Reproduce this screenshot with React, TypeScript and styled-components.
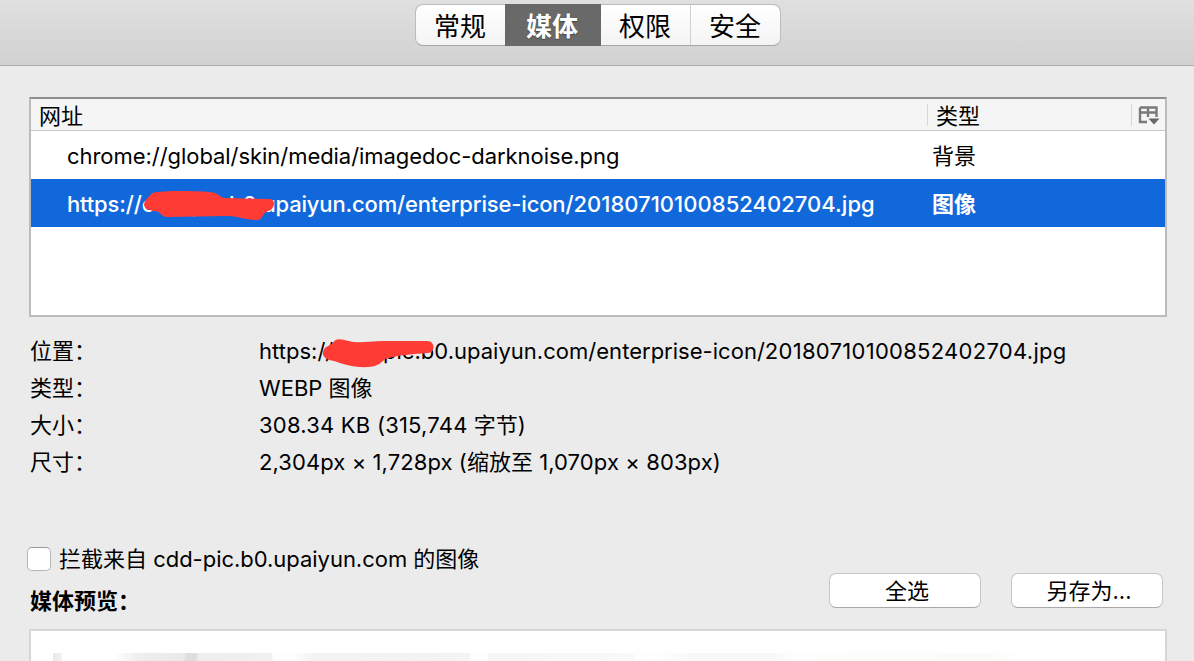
import React from 'react'
import styled, { createGlobalStyle } from 'styled-components'

const GlobalStyle = createGlobalStyle`
* {
  box-sizing: border-box;
}
body {
  margin: 0;
  background: #ebebeb;
  color: #000;
  font-family: Inter, "Noto Sans CJK SC", sans-serif;
  font-size: 22px;
  overflow: hidden;
}
`

const Window = styled.div`
height: 661px;
overflow: hidden;
display: flex;
flex-direction: column;
`

const Toolbar = styled.div`
height: 66px;
flex: none;
display: flex;
justify-content: center;
align-items: flex-start;
padding: 4px 0 0 2px;
background: linear-gradient(#e0e0e0, #d1d1d1);
border-bottom: 1px solid #adadad;
`

const Segments = styled.div`
display: flex;
width: 366px;
height: 42px;
border: 1px solid #bcbcbc;
border-bottom-color: #a5a5a5;
border-radius: 8px;
background: linear-gradient(#fff, #f4f4f4);
`

const Segment = styled.button<{$active?: boolean, $width: number, $line?: boolean}>`
width: ${props => props.$width}px;
height: ${props => props.$active ? "42px" : "40px"};
margin: ${props => props.$active ? "-1px 0" : "0"};
padding: ${props => props.$active ? "3px 2px 0 0" : "2px 1px 0 0"};
border: 0;
border-left: ${props => props.$line ? "1px solid #d0d0d0" : "0"};
background: ${props => props.$active ? "#696969" : "transparent"};
color: ${props => props.$active ? "#fff" : "#000"};
text-shadow: ${props => props.$active ? "0 1px 1px #444" : "none"};
font-family: inherit;
font-size: 26px;
font-weight: ${props => props.$active ? 700 : 400};
line-height: 40px;
`

const Content = styled.main`
flex: 1;
display: flex;
flex-direction: column;
padding: 31px 27px 0 29px;
`

const Table = styled.div`
height: 220px;
flex: none;
background: #fff;
border: 2px solid #bcbcbc;
border-top-color: #8e8e8e;
`

const tableColumns: string = `
  display: grid;
  grid-template-columns: 896px 1fr 34px;
  align-items: center;
`

const TableHead = styled.div`
${tableColumns}
height: 32px;
background: #f5f5f5;
border-bottom: 1px solid #c9c9c9;
`

const HeadCell = styled.div<{$line?: boolean}>`
height: 22px;
line-height: 24px;
padding-left: 8px;
border-left: ${props => props.$line ? "1px solid #d6d6d6" : "0"};
`

const PickerCell = styled(HeadCell)`
padding: 2px 0 0 6px;
line-height: 0;
`

const TableRow = styled.div<{$selected?: boolean}>`
${tableColumns}
height: 48px;
line-height: 50px;
background: ${props => props.$selected ? "#1168da" : "#fff"};
color: ${props => props.$selected ? "#fff" : "#000"};
font-weight: ${props => props.$selected ? 500 : 400};
`

const Cell = styled.div<{$indent?: boolean}>`
position: relative;
height: 48px;
padding-left: ${props => props.$indent ? "36px" : "5px"};
white-space: nowrap;
`

const KindCell = styled(Cell)<{$selected?: boolean}>`
font-weight: ${props => props.$selected ? 700 : 400};
`

const Latin = styled.span<{$spacing?: number}>`
letter-spacing: ${props => props.$spacing || 0}px;
`

const Scribble = styled.svg<{$left: number, $top: number}>`
position: absolute;
left: ${props => props.$left}px;
top: ${props => props.$top}px;
`

const Details = styled.dl`
display: grid;
grid-template-columns: 229px 1fr;
grid-auto-rows: 37px;
margin: 16px 0 0;
padding-left: 1px;
line-height: 37px;
`

const Term = styled.dt`
margin: 0;
`

const Value = styled.dd`
position: relative;
margin: 0;
white-space: nowrap;
`

const Actions = styled.div`
display: flex;
justify-content: space-between;
height: 90px;
margin-top: 58px;
padding-right: 4px;
`

const BlockLabel = styled.label`
display: flex;
align-items: center;
height: 40px;
margin-left: -2px;
line-height: 34px;
white-space: nowrap;
`

const Checkbox = styled.input`
appearance: none;
width: 24px;
height: 24px;
margin: 0 8px 0 0;
background: #fff;
border: 1px solid #b5b5b5;
border-top-color: #999;
border-radius: 5px;
`

const PreviewTitle = styled.div`
height: 42px;
line-height: 44px;
padding-left: 1px;
font-weight: 700;
`

const Buttons = styled.div`
display: flex;
gap: 30px;
padding-top: 34px;
`

const Button = styled.button`
width: 152px;
height: 35px;
padding: 1px 0 0 4px;
border: 1px solid #c6c6c6;
border-bottom-color: #a9a9a9;
border-radius: 7px;
background: #fff;
color: #000;
font: inherit;
line-height: 33px;
`

const Preview = styled.div`
flex: none;
height: 40px;
padding: 22px 0 0 22px;
background: #fff;
border: 2px solid #d6d6d6;
`

const PreviewImage = styled.div`
height: 20px;
background: linear-gradient(90deg,
  #e7e7e7 0, #f1f1f1 8px, #fff 10px, #fff 62px, #eeeeee 84px, #eaeaea 130px,
  #dddddd 134px, #dddddd 142px, #eeeeee 146px, #f0f0f0 219px, #fdfdfd 220px, #fdfdfd 240px,
  #f1f2f1 262px, #f3f4f3 416px, #fdfdfd 418px, #fefefe 434px, #f5f5f5 436px, #f8f9f8 580px,
  #fdfdfd 582px, #fefefe 600px, #f7f8f7 640px, #f8f8f8 720px, #fdfdfd 740px, #fdfcfa 800px, #fdfbfa 940px, #fdfefd 960px, #fefefe);
`

const imagePath: string = 'https://cdd-pic.b0.upaiyun.com/enterprise-icon/'
const imageFile: string = '20180710100852402704.jpg'

const ColumnPicker = () => (
  <svg width="22" height="20" viewBox="0 0 22 20" fill="none">
    <path d="M2 1.5H18.5V11M2 1.5V16H9M2 6.5H18.5M10 2V11" stroke="#7a7a7a" strokeWidth="2.4" />
    <path d="M10.5 12.5H21.5L16 18.5Z" fill="#666" />
  </svg>
)

const App = () => {
  return (
    <Window>
      <GlobalStyle />
      <Toolbar>
        <Segments>
          <Segment $width={89}>常规</Segment>
          <Segment $width={96} $active>媒体</Segment>
          <Segment $width={89}>权限</Segment>
          <Segment $width={90} $line>安全</Segment>
        </Segments>
      </Toolbar>
      <Content>
        <Table>
          <TableHead>
            <HeadCell>网址</HeadCell>
            <HeadCell $line>类型</HeadCell>
            <PickerCell $line><ColumnPicker /></PickerCell>
          </TableHead>
          <TableRow>
            <Cell $indent><Latin $spacing={-0.05}>chrome://global/skin/media/imagedoc-darknoise.png</Latin></Cell>
            <KindCell>背景</KindCell>
          </TableRow>
          <TableRow $selected>
            <Cell $indent>
              <Latin $spacing={-0.16}>{imagePath}</Latin>
              <Latin $spacing={0.04}>{imageFile}</Latin>
              <Scribble $left={112} $top={10} width="134" height="34" viewBox="0 0 134 34">
                <path d="M1 15C3 9 6 8 9 4C22 1 65 2 72 4C77 6 78 9 82 9L127 10C134 11 131 21 125 22C119 24 120 31 114 31C103 31 95 27 84 27L24 28C18 28 18 23 13 22C6 22 1 20 1 15Z" fill="#ff3b36" />
              </Scribble>
            </Cell>
            <KindCell $selected>图像</KindCell>
          </TableRow>
        </Table>
        <Details>
          <Term>位置：</Term>
          <Value>
            <Latin $spacing={0.02}>{imagePath}</Latin>
            <Latin $spacing={0.28}>{imageFile}</Latin>
            <Scribble $left={63} $top={2} width="114" height="34" viewBox="0 0 114 34">
              <path d="M1 17C2 11 8 11 11 8C14 2 20 5 27 6C37 9 48 6 61 6L105 6C114 6 113 18 106 18C92 19 76 20 63 24C59 28 56 31 47 32C31 33 18 28 12 26C5 25 0 22 1 17Z" fill="#ff3b36" />
            </Scribble>
          </Value>
          <Term>类型：</Term>
          <Value><Latin>WEBP</Latin> 图像</Value>
          <Term>大小：</Term>
          <Value><Latin $spacing={0.22}>308.34 KB (315,744</Latin> 字节)</Value>
          <Term>尺寸：</Term>
          <Value><Latin $spacing={0.08}>2,304px × 1,728px (</Latin>缩放至 <Latin $spacing={0.1}>1,070px × 803px)</Latin></Value>
        </Details>
        <Actions>
          <div>
            <BlockLabel>
              <Checkbox type="checkbox" />
              <span>拦截来自 <Latin $spacing={-0.03}>cdd-pic.b0.upaiyun.com</Latin> 的图像</span>
            </BlockLabel>
            <PreviewTitle>媒体预览：</PreviewTitle>
          </div>
          <Buttons>
            <Button>全选</Button>
            <Button>另存为...</Button>
          </Buttons>
        </Actions>
        <Preview>
          <PreviewImage />
        </Preview>
      </Content>
    </Window>
  )
}

export default App
